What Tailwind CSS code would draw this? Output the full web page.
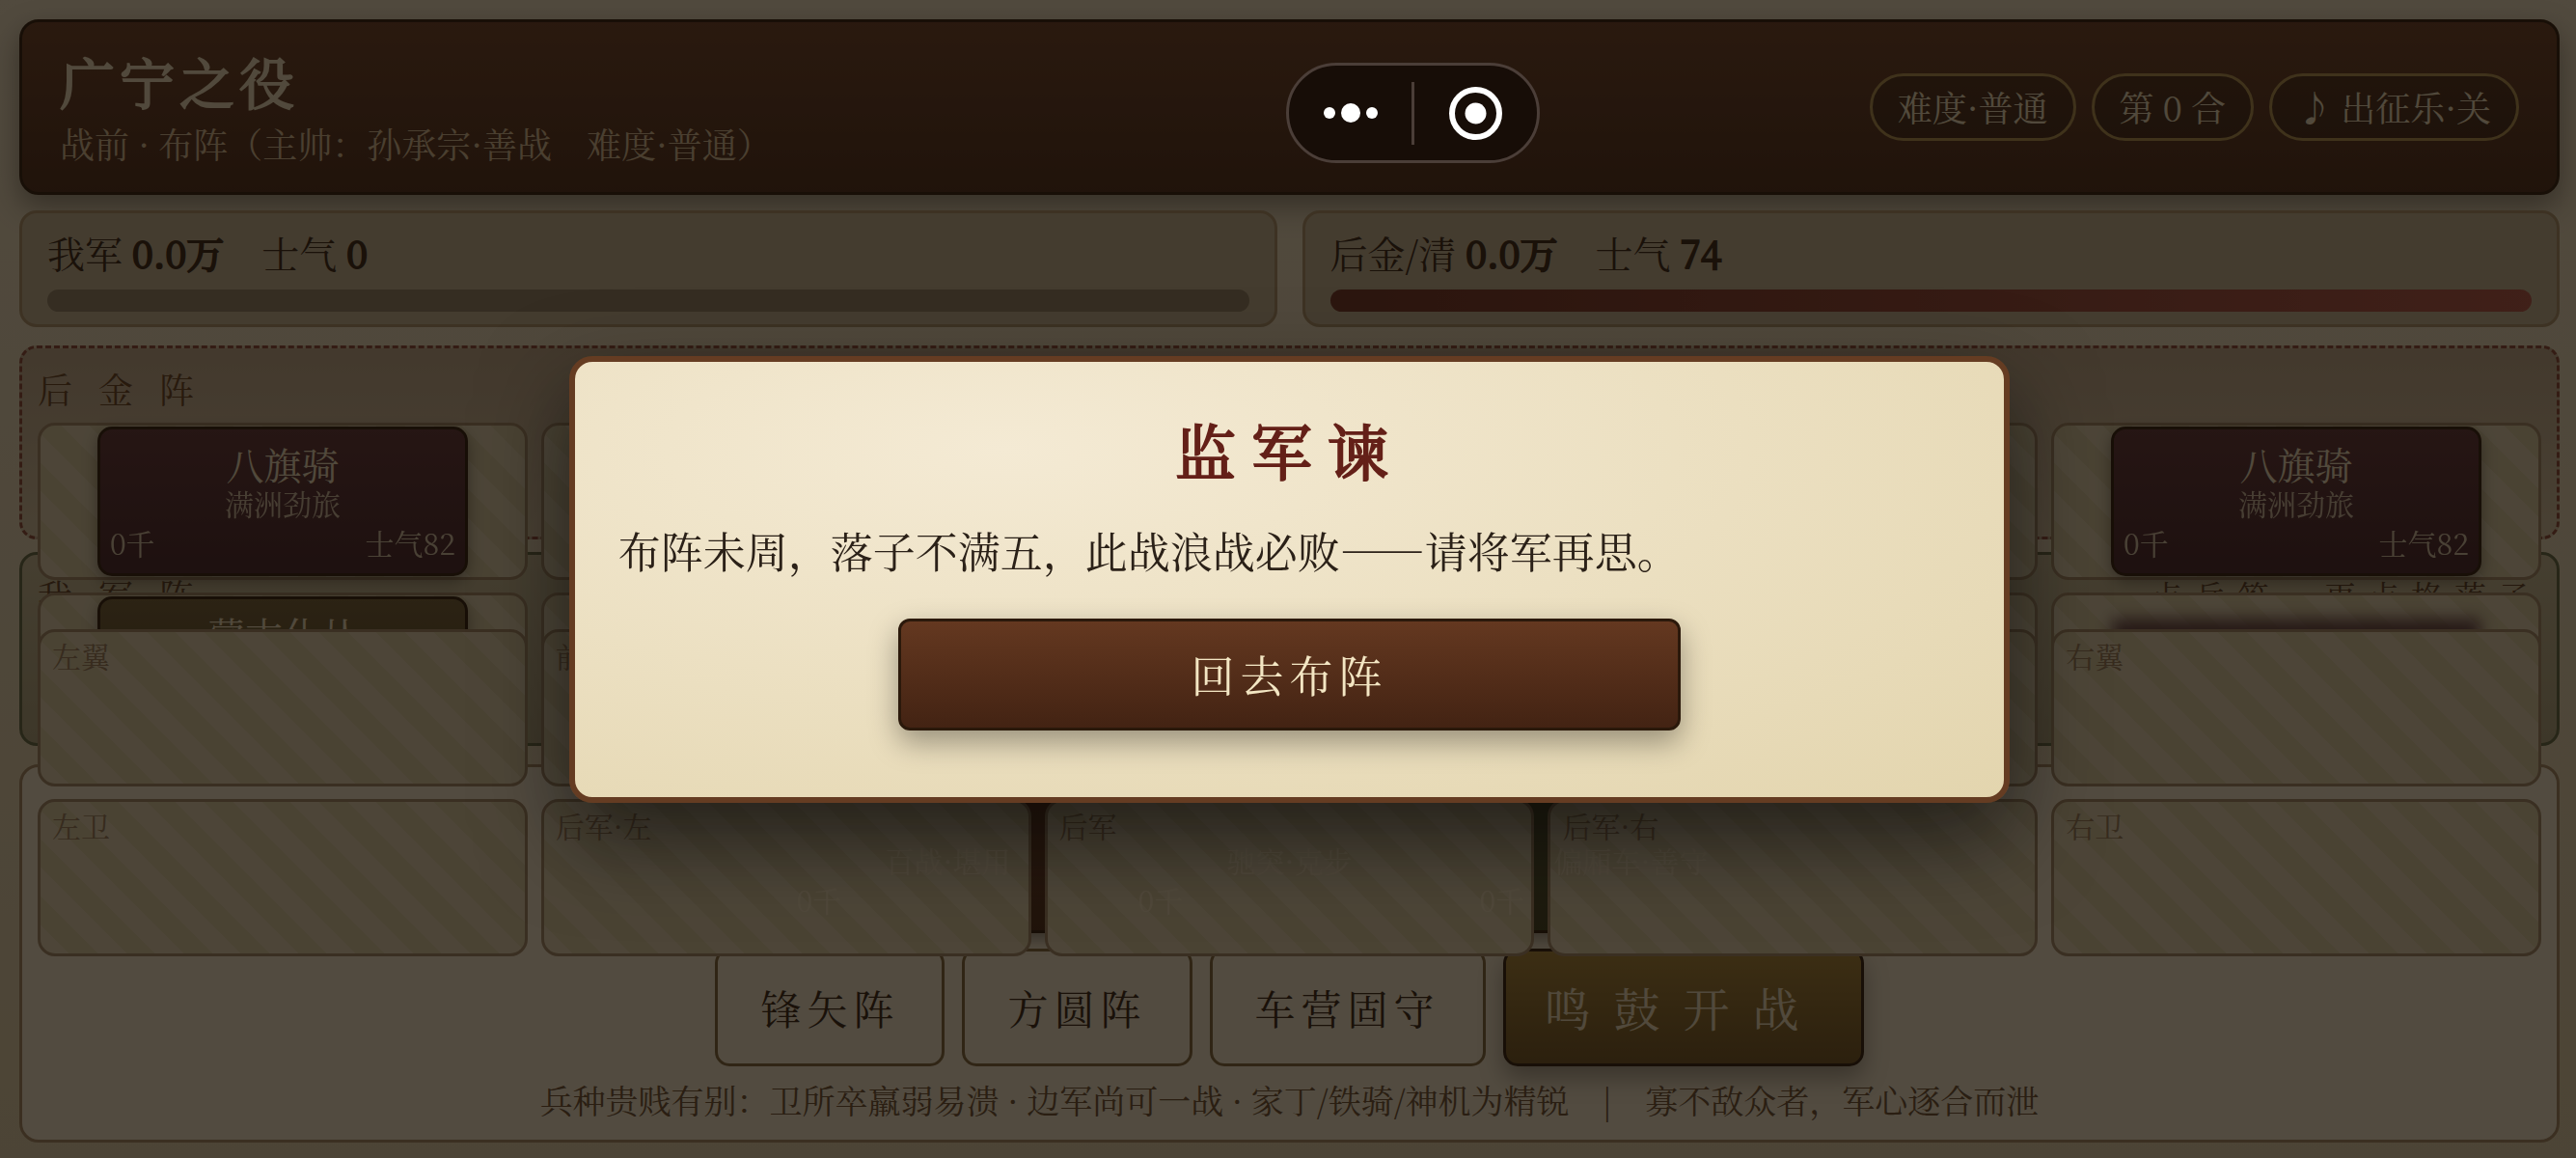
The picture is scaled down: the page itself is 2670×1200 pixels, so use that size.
<!DOCTYPE html>
<html lang="zh-CN">
<head>
    <meta charset="UTF-8">
    <meta name="viewport" content="width=device-width, initial-scale=1.0">
    <title>广宁之役</title>
    <script src="https://cdn.jsdelivr.net/npm/@tailwindcss/browser@4"></script>
</head>
<body class="font-['Noto_Serif_CJK_SC','Noto_Serif_SC','Source_Han_Serif_SC','Songti_SC','Liberation_Serif','Noto_Sans_CJK_SC',serif] bg-[#e8dcbc] text-[#2b190e]">
    <div class="flex flex-col h-screen pl-5 pr-[17px] pt-5 pb-4 bg-linear-to-b from-[#efe4c8] to-[#dfd1ab]">
        <!-- Header -->
        <header class="flex justify-between items-center px-[39px] py-[23px] mb-4 rounded-[20px] border-3 border-[#241407] bg-linear-to-b from-[#643820] to-[#432313] shadow-[0_12px_30px_rgba(0,0,0,0.4)]">
            <div>
                <h1 class="text-[57px] leading-[74px] [-webkit-text-stroke:2px] tracking-[5px] text-[#efe2c0]">广宁之役</h1>
                <p class="pt-0.5 text-[36px] leading-[54px] text-[#d6bd96]">战前 · 布阵（主帅：孙承宗·善战　难度·普通）</p>
            </div>
            <div class="flex gap-4 text-[36px] leading-[64px] text-[#efe2c0]">
                <span class="px-[26px] rounded-full border-3 border-[#b0914e] bg-black/25">难度·普通</span>
                <span class="px-[26px] rounded-full border-3 border-[#b0914e] bg-black/25">第 0 合</span>
                <button class="px-[26px] rounded-full border-3 border-[#b0914e] bg-black/25">♪ 出征乐·关</button>
            </div>
        </header>

        <!-- Army strength -->
        <section class="grid grid-cols-2 gap-[26px] mb-[19px] text-[39px] leading-[56px]">
            <div class="px-[26px] pt-3 pb-[13px] rounded-[18px] border-3 border-[#a88f68] bg-[#c2b394]">
                <div class="mb-[11px]">我军 <b class="font-normal [-webkit-text-stroke:2px]">0.0万</b>　士气 <b class="font-normal [-webkit-text-stroke:2px]">0</b></div>
                <div class="h-[23px] rounded-full bg-[#8b7f64]"></div>
            </div>
            <div class="px-[26px] pt-3 pb-[13px] rounded-[18px] border-3 border-[#a88f68] bg-[#c2b394]">
                <div class="mb-[11px]">后金/清 <b class="font-normal [-webkit-text-stroke:2px]">0.0万</b>　士气 <b class="font-normal [-webkit-text-stroke:2px]">74</b></div>
                <div class="h-[23px] rounded-full bg-linear-to-r from-[#6b2b20] to-[#b24f44]"></div>
            </div>
        </section>

        <!-- Battlefield: the grids are taller than the panels and run over what follows -->
        <main class="flex-1 min-h-0 flex flex-col gap-[13px] mb-[19px]">
            <section class="flex-1 min-h-0 px-4 rounded-[18px] border-3 border-dashed border-[#8a4334] bg-linear-to-b from-[#bda88c] to-[#d2c3a2]">
                <h2 class="text-[36px] leading-[54px] pt-[15px] mb-2 tracking-[27px] text-[#5e3a1c]">后金阵</h2>
                <div id="enemy-grid" class="grid grid-cols-5 gap-x-[14px] gap-y-[13px]"></div>
            </section>
            <section class="flex-1 min-h-0 px-4 rounded-[18px] border-3 border-[#5c6540] bg-linear-to-b from-[#c6bc98] to-[#a9a27e]">
                <div class="flex justify-between pt-[15px] mb-2 leading-[54px] text-[#56381e]">
                    <h2 class="text-[36px] tracking-[27px]">我军阵</h2>
                    <span class="text-[33px] tracking-[12px]">点兵签，再点格落子</span>
                </div>
                <div id="my-grid" class="grid grid-cols-5 gap-x-[14px] gap-y-[13px]"></div>
            </section>
        </main>

        <!-- Tray -->
        <footer class="px-4 pt-[17px] pb-4 rounded-[20px] border-3 border-[#a08560] bg-[#f2e8cf]">
            <div id="tray" class="flex justify-center gap-[14px] mb-4"></div>
            <div class="flex justify-center gap-[18px] mb-2.5 text-[42px] leading-[116px] tracking-[6px]">
                <button class="px-11 rounded-[15px] border-3 border-[#7a6238]">锋矢阵</button>
                <button class="px-11 rounded-[15px] border-3 border-[#7a6238]">方圆阵</button>
                <button class="px-11 rounded-[15px] border-3 border-[#7a6238]">车营固守</button>
                <button class="px-10 rounded-[15px] border-3 border-[#241407] text-[48px] tracking-[24px] text-[#efe2c0] bg-linear-to-b from-[#a48132] to-[#6b4f1d] shadow-[0_12px_24px_rgba(0,0,0,0.35)]">鸣鼓开战</button>
            </div>
            <p class="text-center text-[34px] leading-[50px] text-[#64492c]">兵种贵贱有别：卫所卒羸弱易溃 · 边军尚可一战 · 家丁/铁骑/神机为精锐　|　寡不敌众者，军心逐合而泄</p>
        </footer>
    </div>

    <!-- Modal -->
    <div class="fixed inset-0 z-40 flex items-center justify-center pl-[3px] bg-[rgba(20,14,8,0.72)]">
        <div role="dialog" aria-labelledby="modal-title" class="w-[56%] px-[45px] pt-[45px] pb-[69px] rounded-3xl border-6 border-[#653c22] bg-[radial-gradient(ellipse_at_30%_20%,#f4ead4,#e3d5ae)] shadow-[0_36px_90px_rgba(0,0,0,0.55)]">
            <h2 id="modal-title" class="text-center text-[63px] leading-[90px] [-webkit-text-stroke:2px] tracking-[16px] text-[#642018]">监军谏</h2>
            <p class="mt-[22px] mb-[33px] text-[44px] leading-[76px] text-[#2b2118]">布阵未周，落子不满五，此战浪战必败——请将军再思。</p>
            <button class="block w-7/12 mx-auto rounded-xl border-3 border-[#2b190b] bg-linear-to-b from-[#643820] to-[#432313] text-[45px] leading-[110px] tracking-[6px] text-[#f3e6c3] shadow-[0_12px_30px_rgba(0,0,0,0.35)]">回去布阵</button>
        </div>
    </div>

    <!-- Mini program capsule -->
    <div class="fixed top-[65px] left-1/2 -ml-0.5 z-50 flex items-center w-[263px] h-[104px] rounded-full border-3 border-[#4b3e38] bg-[#170d07]">
        <button class="flex-1 flex justify-center" aria-label="更多">
            <svg class="w-14 h-5" viewBox="0 0 56 20" fill="#fff">
                <circle cx="6" cy="10" r="6"/>
                <circle cx="28" cy="10" r="10"/>
                <circle cx="50" cy="10" r="6"/>
            </svg>
        </button>
        <span class="w-[3px] h-[65px] bg-[#4b3e38]"></span>
        <button class="flex-1 flex justify-center" aria-label="关闭">
            <svg class="w-[55px] h-[55px]" viewBox="0 0 55 55">
                <circle cx="27.5" cy="27.5" r="24.5" fill="none" stroke="#fff" stroke-width="6"/>
                <circle cx="27.5" cy="27.5" r="11" fill="#fff"/>
            </svg>
        </button>
    </div>

    <script>
        const slotClass = "relative flex items-center justify-center h-[163px] rounded-[18px] border-3 border-[#9e8564] bg-[repeating-linear-gradient(45deg,#e0d5b4_0_21px,#d6cba3_21px_42px)]";
        const tints = {
            red: "from-[#562b32] to-[#391924]",
            olive: "from-[#6b5932] to-[#43371c]",
            brown: "from-[#643820] to-[#432313]",
            steel: "from-[#4a4a52] to-[#2f2f36]",
            green: "from-[#4a4f2c] to-[#353a1c]"
        };

        function card(unit, width) {
            return `<div class="${width} h-[155px] px-2.5 pt-[11px] rounded-[15px] border-3 border-[#241407] bg-linear-to-b ${tints[unit.tint]} text-[#efe2c0] shadow-[0_6px_15px_rgba(0,0,0,0.4)]">
                <div class="text-center text-[39px] leading-[48px]">${unit.name}</div>
                <div class="text-center text-[30px] leading-[34px] opacity-80">${unit.note}</div>
                <div class="flex justify-between text-[30px] leading-[48px]"><span class="opacity-85">${unit.men}</span><span class="opacity-85">${unit.morale}</span></div>
            </div>`;
        }

        const banner = { name: "八旗骑", note: "满洲劲旅", men: "0千", morale: "士气82", tint: "red" };
        const servant = { name: "蒙古仆从", note: "附庸轻骑", men: "0千", morale: "士气70", tint: "olive" };
        const enemy = [banner, banner, banner, banner, banner, servant, servant, servant, servant, null];

        document.getElementById("enemy-grid").innerHTML = enemy.map(unit => {
            // an unscouted unit is only a blurred shape
            const inner = unit ? card(unit, "w-96") : `<div class="absolute inset-x-[60px] top-6 bottom-4 bg-[#4a2830] opacity-90 blur-[8px]"></div>`;
            return `<div class="${slotClass}">${inner}</div>`;
        }).join("");

        const places = ["左翼", "前军·左", "前军", "前军·右", "右翼", "左卫", "后军·左", "后军", "后军·右", "右卫"];
        document.getElementById("my-grid").innerHTML = places.map(place =>
            `<button class="${slotClass}"><span class="self-start mr-auto px-3 pt-0.5 text-[30px] leading-[44px] text-[#937857]">${place}</span></button>`
        ).join("");

        const reserve = [
            { name: "边军", note: "百战·堪用", men: "0千", morale: "", tint: "brown" },
            { name: "铁骑", note: "驰突·克步", men: "0千", morale: "", tint: "steel" },
            { name: "车营", note: "偏厢车·善守", men: "0千", morale: "", tint: "green" }
        ];
        document.getElementById("tray").innerHTML = reserve.map(unit => card(unit, "w-[340px]")).join("");
    </script>
</body>
</html>
